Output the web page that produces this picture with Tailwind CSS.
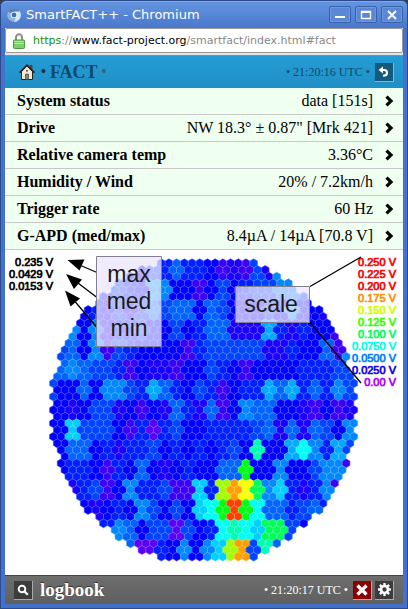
<!DOCTYPE html>
<html lang="en">
<head>
<meta charset="utf-8">
<meta name="viewport" content="width=device-width, initial-scale=1">
<title>SmartFACT++</title>
<script src="https://cdn.jsdelivr.net/npm/@tailwindcss/browser@4"></script>
</head>
<body class="bg-[#3a3d48]">
<div class="flex min-h-screen flex-col rounded-t-md border-x border-t border-b-2 border-[#2d4a8c] bg-[#4472c8] px-1 pb-1 font-['Liberation_Serif',serif]">
  <header class="-mx-1 flex h-[27px] items-center rounded-t-md bg-linear-to-b from-[#6495e0] to-[#4a78cc] pr-1 pl-1.5 shadow-[inset_0_1px_0_#7fa8ea]">
    <svg class="mr-[5px] size-[14px]" viewBox="0 0 14 14" aria-hidden="true">
      <circle cx="7" cy="7" r="6.8" fill="#8fb4dc"/>
      <path d="M7 7 1.1 3.6A6.8 6.8 0 0 1 12.9 3.6L7 3.8Z" fill="#5384bb"/>
      <path d="M7 3.8 12.9 3.6A6.8 6.8 0 0 1 7 13.8L9.8 8.6Z" fill="#d3e4f5"/>
      <circle cx="7" cy="7" r="3.3" fill="#eef5fc"/><circle cx="7" cy="7" r="2.4" fill="#3f74b4"/>
    </svg>
    <h1 class="grow font-['DejaVu_Sans',sans-serif] text-[13px] leading-4 text-white">SmartFACT++ - Chromium</h1>
    <div class="flex gap-1">
      <button aria-label="Minimize" class="flex h-[17px] w-[22px] items-center justify-center rounded-xs border border-[#3a62a8] bg-[#5a88d6] shadow-[inset_0_0_0_1px_#7098de]"><svg class="size-3" viewBox="0 0 12 12"><path d="M1 8h10" stroke="#fff" stroke-width="2"/></svg></button>
      <button aria-label="Maximize" class="flex h-[17px] w-[22px] items-center justify-center rounded-xs border border-[#3a62a8] bg-[#5a88d6] shadow-[inset_0_0_0_1px_#7098de]"><svg class="size-3" viewBox="0 0 12 12"><path d="M1.500 2.500h9v7h-9z" fill="none" stroke="#fff" stroke-width="1.300"/><path d="M1 3h10" stroke="#fff" stroke-width="2"/></svg></button>
      <button aria-label="Close" class="flex h-[17px] w-[22px] items-center justify-center rounded-xs border border-[#3a62a8] bg-[#5a88d6] shadow-[inset_0_0_0_1px_#7098de]"><svg class="size-3" viewBox="0 0 12 12"><path d="m2 2 8 8M10 2 2 10" stroke="#fff" stroke-width="1.800"/></svg></button>
    </div>
  </header>

  <div class="border-b border-[#8a8a8a] bg-[#e4e4e4] pb-[2px]">
    <div class="flex h-[25px] items-center rounded-xs border border-[#9a9a9a] bg-white pl-[7px]">
      <svg class="mr-2 h-4 w-3" viewBox="0 0 12 16" aria-hidden="true">
        <path d="M3 8V4.500a3 3.200 0 0 1 6 0V8" fill="none" stroke="#8c8c8c" stroke-width="2"/>
        <rect x=".5" y="7" width="11" height="8.500" rx=".8" fill="#7fce6e" stroke="#4d9a40"/>
        <path d="M1.500 8.500h9M1.500 10.500h9" stroke="#b4e8a8"/>
      </svg>
      <div class="font-['DejaVu_Sans',sans-serif] text-[11px] leading-4 text-[#888]"><span class="text-[#0a930a]">https</span>://<span class="text-black">www.fact-project.org</span>/smartfact/index.html#fact</div>
    </div>
  </div>

  <main class="flex grow flex-col bg-white">
    <div class="flex h-8 items-center bg-linear-to-b from-[#249cd6] to-[#2090c6] pr-[9px] pl-[14px] text-[#0f4a68]">
      <a href="#home" aria-label="Home"><svg class="size-4" viewBox="0 0 16 16">
        <path d="M2.500 7.500v8h11v-8L8 2z" fill="#f4ead4" stroke="#222"/>
        <path d="M11 1.500h2V5h-2z" fill="#a44" stroke="#222" stroke-width=".6"/>
        <path d="M.6 8.600 8 1.200l7.400 7.400" fill="none" stroke="#222" stroke-width="1.700"/>
        <path d="M6.500 10h3v5.500h-3z" fill="#8a8074" stroke="#333" stroke-width=".6"/><circle cx="8" cy="6.800" r="1" fill="#554"/>
      </svg></a>
      <h2 class="ml-[6px] flex grow items-center gap-1 text-lg leading-5 font-bold"><span class="text-sm text-[#12303f]">•</span><span>FACT</span><span class="text-sm text-[#3c6078]">•</span></h2>
      <span class="mr-[5px] text-xs">• 21:20:16 UTC •</span>
      <button aria-label="Back" class="flex size-[19px] items-center justify-center border-r border-b border-[#7fb8d4] bg-[#155a7c]"><svg class="size-3" viewBox="0 0 12 12"><path d="M4 4h2.200a2.800 2.800 0 0 1 0 5.600H5" fill="none" stroke="#fff" stroke-width="2.100"/><path d="M.5 4 5 .4v7.200z" fill="#fff"/></svg></button>
    </div>

    <nav id="status" class="bg-[#effff0] text-base leading-[26px] text-black">
      <a href="#status" class="flex h-[27px] border-b border-[#c8c8c8] pr-[9px] pl-3"><b class="grow">System status</b><span>data [151s]</span><svg class="mt-[7px] ml-3 h-3 w-[9px]" viewBox="0 0 9 12"><path d="m1.500 1.600 4.500 4.400-4.500 4.400" fill="none" stroke="#000" stroke-width="3.200"/></svg></a>
      <a href="#drive" class="flex h-[27px] border-b border-[#c8c8c8] pr-[9px] pl-3"><b class="grow">Drive</b><span>NW 18.3° ± 0.87" [Mrk 421]</span><svg class="mt-[7px] ml-3 h-3 w-[9px]" viewBox="0 0 9 12"><path d="m1.500 1.600 4.500 4.400-4.500 4.400" fill="none" stroke="#000" stroke-width="3.200"/></svg></a>
      <a href="#temp" class="flex h-[27px] border-b border-[#c8c8c8] pr-[9px] pl-3"><b class="grow">Relative camera temp</b><span>3.36°C</span><svg class="mt-[7px] ml-3 h-3 w-[9px]" viewBox="0 0 9 12"><path d="m1.500 1.600 4.500 4.400-4.500 4.400" fill="none" stroke="#000" stroke-width="3.200"/></svg></a>
      <a href="#weather" class="flex h-[27px] border-b border-[#c8c8c8] pr-[9px] pl-3"><b class="grow">Humidity / Wind</b><span>20% / 7.2km/h</span><svg class="mt-[7px] ml-3 h-3 w-[9px]" viewBox="0 0 9 12"><path d="m1.500 1.600 4.500 4.400-4.500 4.400" fill="none" stroke="#000" stroke-width="3.200"/></svg></a>
      <a href="#trigger" class="flex h-[27px] border-b border-[#c8c8c8] pr-[9px] pl-3"><b class="grow">Trigger rate</b><span>60 Hz</span><svg class="mt-[7px] ml-3 h-3 w-[9px]" viewBox="0 0 9 12"><path d="m1.500 1.600 4.500 4.400-4.500 4.400" fill="none" stroke="#000" stroke-width="3.200"/></svg></a>
      <a href="#gapd" class="flex h-[27px] border-b border-[#c8c8c8] pr-[9px] pl-3"><b class="grow">G-APD (med/max)</b><span>8.4µA / 14µA [70.8 V]</span><svg class="mt-[7px] ml-3 h-3 w-[9px]" viewBox="0 0 9 12"><path d="m1.500 1.600 4.500 4.400-4.500 4.400" fill="none" stroke="#000" stroke-width="3.200"/></svg></a>
    </nav>

    <svg class="block h-auto w-full grow font-['Liberation_Sans',sans-serif]" viewBox="5 250 398 325" role="img" aria-label="Camera display">
      <g id="pixels" stroke-width=".5"></g>
      <path id="grid" fill="none" stroke="#fff" stroke-opacity=".26" stroke-width=".5"/>
      <g text-anchor="end" font-size="11" stroke-width=".7" fill="#000" stroke="#000">
        <text x="53" y="266">0.235 V</text><text x="53" y="278">0.0429 V</text><text x="53" y="290">0.0153 V</text>
      </g>
      <g id="scale" text-anchor="end" font-size="11" stroke-width=".7">
        <text x="396" y="266" fill="#f00" stroke="#f00">0.250 V</text>
        <text x="396" y="278" fill="#f00" stroke="#f00">0.225 V</text>
        <text x="396" y="290" fill="#f00" stroke="#f00">0.200 V</text>
        <text x="396" y="302" fill="#ff9000" stroke="#ff9000">0.175 V</text>
        <text x="396" y="314" fill="#d4ff00" stroke="#d4ff00">0.150 V</text>
        <text x="396" y="326" fill="#38ff00" stroke="#38ff00">0.125 V</text>
        <text x="396" y="338" fill="#00ff5a" stroke="#00ff5a">0.100 V</text>
        <text x="396" y="350" fill="#00ffee" stroke="#00ffee">0.0750 V</text>
        <text x="396" y="362" fill="#0080ff" stroke="#0080ff">0.0500 V</text>
        <text x="396" y="374" fill="#1400ee" stroke="#1400ee">0.0250 V</text>
        <text x="396" y="386" fill="#aa00ff" stroke="#aa00ff">0.00 V</text>
      </g>
      <g stroke="#000" stroke-width="1.300">
        <path d="M97 272.500 76 263.500M97 297.500 74 280M97 327.500 72 298M310 286.500 361 257M310 322.500 361 383"/>
        <path stroke="none" d="m67.500 260 17-.5-5 11ZM66 274l16 5.500-8 9.500ZM65 290.500l15 8-9.500 8Z"/>
      </g>
      <g fill="#ebe6fe" fill-opacity=".75" stroke="#808090">
        <path d="M96.500 256.500h65v90h-65zM235.500 286.500h74v36h-74z"/>
      </g>
      <g font-size="23" text-anchor="middle" fill="#1a1a1a">
        <text x="129" y="282">max</text><text x="129" y="309">med</text><text x="129" y="336">min</text><text x="271" y="312">scale</text>
      </g>
    </svg>

    <footer class="flex h-[29px] items-center border-t border-[#444] bg-linear-to-b from-[#6e6e6e] to-[#5f5f5f] pr-[9px] pl-[9px] text-white">
      <button aria-label="Search" class="flex size-[19px] items-center justify-center border-r border-b border-[#aaa] bg-[#3c3c3c]"><svg class="size-3" viewBox="0 0 12 12"><circle cx="5" cy="5" r="3.300" fill="none" stroke="#fff" stroke-width="2"/><path d="m7.500 7.500 3.300 3.300" stroke="#fff" stroke-width="2.300"/></svg></button>
      <h2 class="ml-[7px] grow text-[19px] leading-6 font-bold text-shadow-[0_-1px_1px_#333]">logbook</h2>
      <span class="mr-[5px] text-xs">• 21:20:17 UTC •</span>
      <button aria-label="Stop" class="mr-[3px] flex size-[19px] items-center justify-center border-r border-b border-[#aaa] bg-[#8b0000]"><svg class="size-3" viewBox="0 0 12 12"><path d="m1.500 1.500 9 9M10.500 1.500l-9 9" stroke="#fff" stroke-width="3.200"/></svg></button>
      <button aria-label="Settings" class="flex size-[19px] items-center justify-center border-r border-b border-[#aaa] bg-[#3c3c3c]"><svg class="size-[13px]" viewBox="0 0 12 12"><circle cx="6" cy="6" r="3.200" fill="none" stroke="#fff" stroke-width="2.400"/><path d="M6 0v2.500M6 9.500V12M0 6h2.500M9.500 6H12M1.800 1.800l1.700 1.700M8.500 8.500l1.700 1.700M10.200 1.800 8.500 3.500M3.500 8.500l-1.700 1.700" stroke="#fff" stroke-width="2.200"/></svg></button>
    </footer>
  </main>
</div>
<script>
  // Colour index of each bias patch; a band spans three pixel rows and holds patches -16 to 10.
  const palette = {0:'#5a00f5',1:'#3c00f5',2:'#1c00ff',3:'#0000ff',4:'#0020ff',5:'#0044ff',6:'#0064ff',7:'#0088ff',8:'#00aaff',9:'#00d0ff',
    a:'#00fff4',b:'#00ffb4',c:'#00ff5a',d:'#00ff14',e:'#a0ff00',f:'#ffff00',g:'#ffa000',h:'#ff4000'};
  const bands = [
    '333333333546443121527833333',
    '444444543873313534557753333',
    '333342525756636533353833233',
    '337372445335346622284243313',
    '556371543333145555522433617',
    '667655413221335431333344455',
    '533637754864354134486846475',
    '332355231326426137663321312',
    '339555314045334444562626537',
    '336634244534343453b338a7485',
    '33443143632343366d337335771',
    '222451374451194egfc79424711',
    '33332343753539adhda66456444',
    '444444763550534aba9cc533333',
    '6666666600437379eg5b6666666'
  ];
  // Leftmost pixel of each row down to the middle one, in half pitches from the reference column.
  const first = [-19,-24,-27,-30,-31,-34,-35,-38,-39,-40,-41,-42,-43,-44,-45,-44,-45,-46,-47,-46,-47,-46,-47];
  const h = 3.85, s = 4.446;
  let pixels = '', grid = '';
  for (let i = 0; i < 45; i++) {
    const n = Math.min(i, 44 - i), k = Math.floor(i / 3);
    const last = n === 0 ? 5 : -16 - first[n];
    for (let j = first[n]; j <= last; j += 2) {
      const m = Math.round((j + (k === 14 ? 1 : 0)) / 3) + 16;
      const x = 234.4 + h * j, y = 263.3 + 6.667 * i;
      const d = `M${x.toFixed(2)} ${(y - s).toFixed(2)}l${h} ${s / 2}v${s}l-${h} ${s / 2}l-${h}-${s / 2}v-${s}z`;
      const color = palette[bands[k][m]];
      pixels += `<path fill="${color}" stroke="${color}" d="${d}"/>`;
      grid += d;
    }
  }
  document.getElementById('pixels').innerHTML = pixels;
  document.getElementById('grid').setAttribute('d', grid);
</script>
</body>
</html>
